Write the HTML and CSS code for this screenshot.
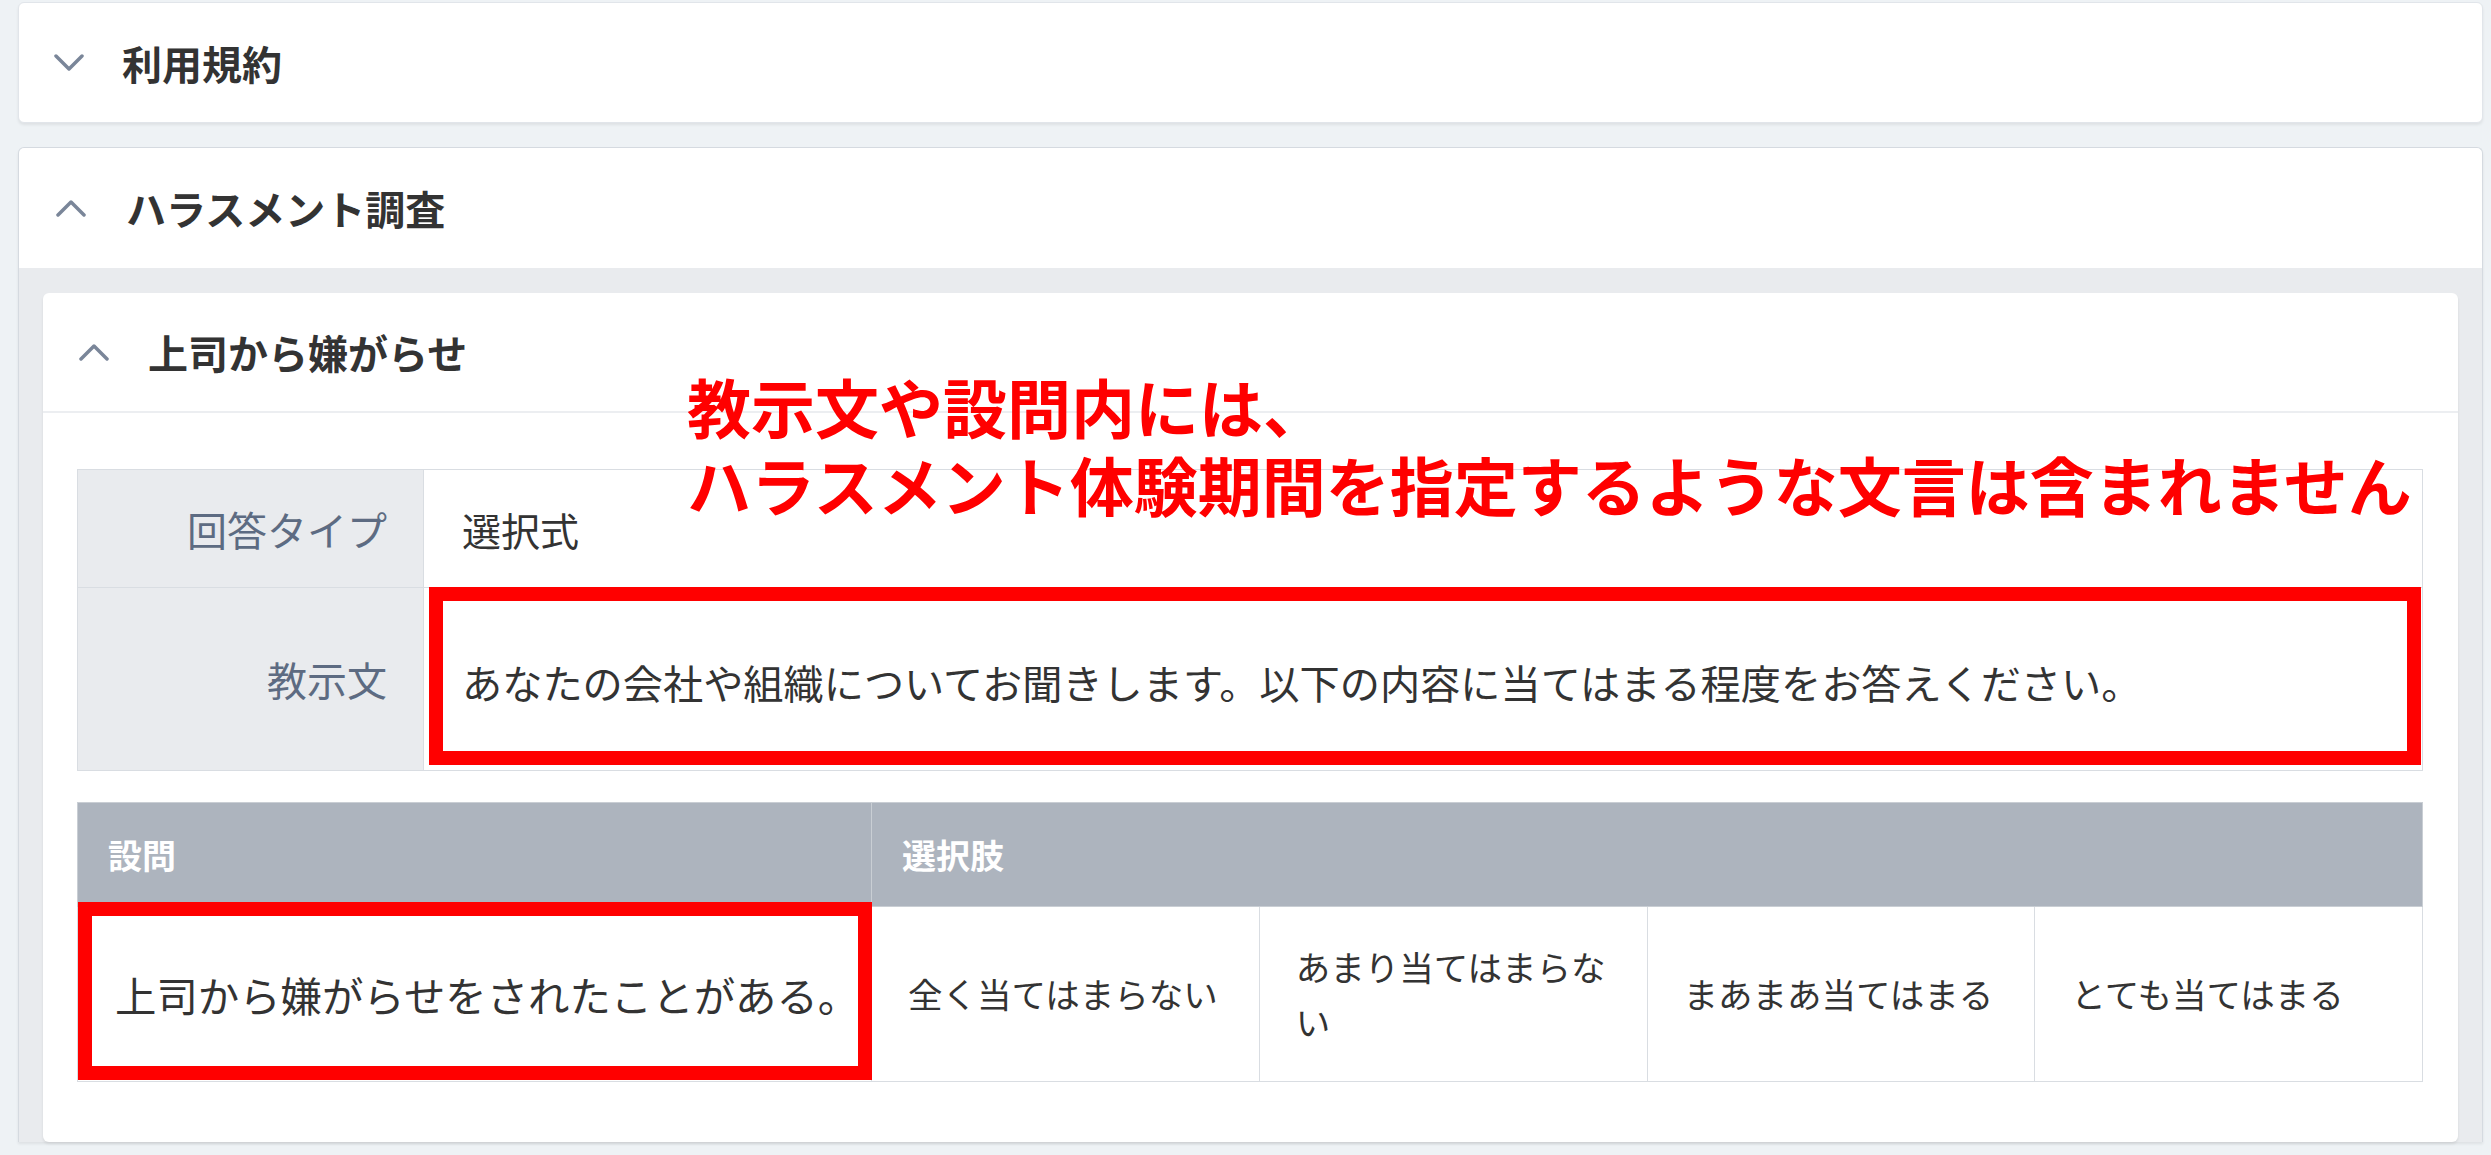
FILE: index.html
```html
<html>
	<head>
		<meta charset="utf-8">
		<link rel="stylesheet" href="styles.css">
	</head>
	<body>
		<div class="panel panel-closed">
			<div class="panel-head">
				<svg class="chev" width="30" height="20" viewBox="0 0 30 20"><polyline points="2,3 15,16 28,3"/></svg>
				<span>利用規約</span>
			</div>
		</div>

		<div class="panel panel-open">
			<div class="panel-head">
				<svg class="chev" width="30" height="20" viewBox="0 0 30 20"><polyline points="2,17 15,4 28,17"/></svg>
				<span>ハラスメント調査</span>
			</div>
			<div class="panel-body">
				<div class="item">
					<div class="item-head">
						<svg class="chev" width="30" height="20" viewBox="0 0 30 20"><polyline points="2,17 15,4 28,17"/></svg>
						<span>上司から嫌がらせ</span>
					</div>
					<div class="item-body">
						<table class="info">
							<tr class="row-type">
								<th>回答タイプ</th>
								<td>選択式</td>
							</tr>
							<tr class="row-text">
								<th>教示文</th>
								<td class="marked">あなたの会社や組織についてお聞きします。以下の内容に当てはまる程度をお答えください。<span class="mark mark-info"></span></td>
							</tr>
						</table>

						<table class="questions">
							<colgroup>
								<col class="col-q">
								<col><col><col><col>
							</colgroup>
							<tr class="q-head">
								<th>設問</th>
								<th colspan="4">選択肢</th>
							</tr>
							<tr class="q-row">
								<td class="marked q-text">上司から嫌がらせをされたことがある。<span class="mark mark-q"></span></td>
								<td>全く当てはまらない</td>
								<td>あまり当てはまらない</td>
								<td>まあまあ当てはまる</td>
								<td>とても当てはまる</td>
							</tr>
						</table>
					</div>
					<div class="note">教示文や設問内には、<br>ハラスメント体験期間を指定するような文言は含まれません</div>
				</div>
			</div>
		</div>
	</body>
</html>
```

FILE: styles.css
```css
body {
	margin: 0;
	padding: 2px 8px 0 18px;
	background-color: #eef2f5;
	font-family: "Noto Sans CJK JP", "Noto Sans", sans-serif;
	color: #333333;
	overflow: hidden;
}

.panel {
	background-color: #ffffff;
	border: 1px solid #e1e5ea;
	border-radius: 6px;
	box-shadow: 0 2px 3px rgba(0, 0, 0, 0.07);
}

.panel-open {
	margin-top: 24px;
	border-color: #d5dae0;
	border-bottom: 0;
	border-radius: 6px 6px 0 0;
}

.panel-head {
	height: 119px;
	display: flex;
	align-items: center;
	gap: 38px;
	padding-left: 35px;
	font-size: 40px;
	font-weight: 600;
}

.panel-open .panel-head {
	height: 120px;
	padding-left: 37px;
	gap: 40px;
}

.chev polyline {
	fill: none;
	stroke: #7a8699;
	stroke-width: 3.5;
	stroke-linecap: round;
	stroke-linejoin: round;
}

.panel-body {
	background-color: #e9ebee;
	padding: 25px 24px 0 24px;
}

.item {
	position: relative;
	background-color: #ffffff;
	border-radius: 6px;
	box-shadow: 0 2px 3px rgba(0, 0, 0, 0.08);
}

.item-head {
	height: 118px;
	display: flex;
	align-items: center;
	gap: 39px;
	padding-left: 36px;
	border-bottom: 2px solid #eceef1;
	font-size: 40px;
	font-weight: 600;
}

.item-body {
	padding: 56px 35px 60px 34px;
}

table {
	width: 100%;
	border-collapse: collapse;
}

.info th,
.info td {
	border: 1px solid #d9dde2;
}

.info th {
	width: 309px;
	padding: 0 36px 0 0;
	background-color: #e9ebee;
	color: #5d6b82;
	font-size: 40px;
	font-weight: 400;
	text-align: right;
}

.info td {
	padding: 0 0 0 38px;
	font-size: 39px;
}

.row-type {
	height: 118px;
}

.row-text {
	height: 183px;
}

.row-text td {
	padding-top: 4px;
	font-size: 40.2px;
}

.marked {
	position: relative;
}

.mark {
	position: absolute;
	border: 14px solid #ff0000;
}

.mark-info {
	top: -1px;
	right: 1px;
	bottom: 5px;
	left: 5px;
}

.questions {
	margin-top: 31px;
	table-layout: fixed;
}

.col-q {
	width: 794px;
}

.questions th,
.questions td {
	border: 1px solid #d9dde2;
	vertical-align: middle;
}

.q-head {
	height: 104px;
}

.q-head th {
	padding: 0 30px;
	background-color: #adb4be;
	border-color: #c9ced4;
	color: #ffffff;
	font-size: 34px;
	font-weight: 700;
	text-align: left;
}

.q-row {
	height: 175px;
}

.q-row td {
	padding: 0 36px;
	font-size: 34.5px;
	line-height: 1.6;
}

.q-row .q-text {
	padding: 0 8px 0 37px;
	font-size: 41.4px;
	white-space: nowrap;
}

.mark-q {
	top: -5px;
	right: -1px;
	bottom: 1px;
	left: 0;
}

.note {
	position: absolute;
	top: 73px;
	left: 644px;
	color: #ff0000;
	font-size: 64px;
	font-weight: 700;
	line-height: 78px;
	white-space: nowrap;
}
```
